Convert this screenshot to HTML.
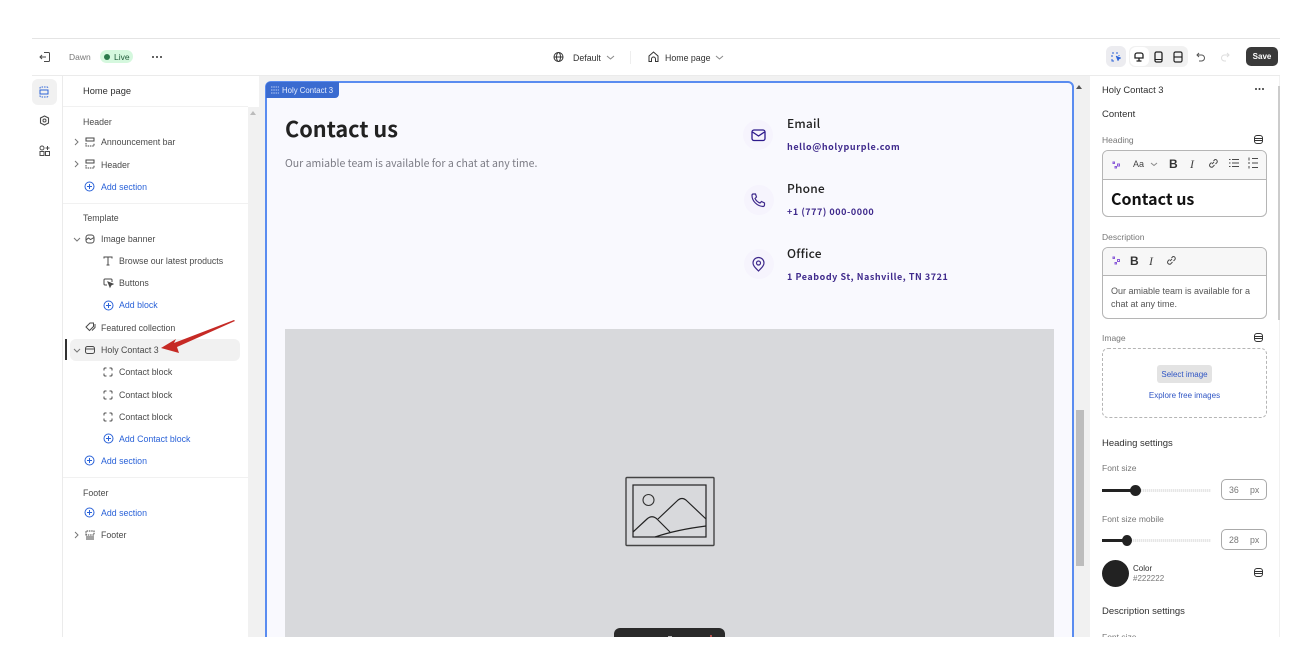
<!DOCTYPE html>
<html><head><meta charset="utf-8">
<style>
html,body{margin:0;padding:0;background:#fff}
body{width:1304px;height:664px;overflow:hidden;position:relative;font-family:"Liberation Sans",sans-serif;color:#444}
.b{position:absolute}
.t{position:absolute;white-space:nowrap;font-size:8.800px;line-height:12px;color:#4a4a4a}
.h{color:#303030}
.bl{color:#2a62d8}
.s{color:#777}
.p{position:absolute;white-space:nowrap;font-family:"Noto Sans CJK JP",sans-serif}
svg{position:absolute;overflow:visible;fill:none;stroke:#4a4a4a;stroke-width:1}
#wrap{filter:blur(.3px)}
</style></head><body>
<div id="wrap" class="b" style="left:0;top:0;width:1304px;height:664px;overflow:hidden">

<!-- frame -->
<div class="b" style="left:32px;top:38px;width:1248px;height:1px;background:#e4e4e4"></div>
<div class="b" style="left:32px;top:75px;width:1248px;height:1px;background:#ebebeb"></div>

<!-- top bar left -->
<svg style="left:39px;top:51px" width="12" height="12"><path d="M5 1.500h4.500a1 1 0 0 1 1 1v7a1 1 0 0 1-1 1H5M1 6h6M3 4 1 6l2 2"/></svg>
<div class="t s" style="left:69px;top:51px;font-size:8.500px">Dawn</div>
<div class="b" style="left:100px;top:50px;width:33px;height:13px;border-radius:7px;background:#d5f8de"></div>
<div class="b" style="left:104px;top:54px;width:6px;height:6px;border-radius:50%;background:#2b7a4b"></div>
<div class="t" style="left:114px;top:51px;font-size:8.500px;color:#1f5a39">Live</div>
<div class="b" style="left:152px;top:56px;width:2px;height:2px;background:#333;border-radius:50%;box-shadow:4px 0 #333,8px 0 #333"></div>

<!-- top bar center -->
<svg style="left:553px;top:51px" width="12" height="12"><circle cx="5.500" cy="6" r="4.500" stroke="#333"/><ellipse cx="5.500" cy="6" rx="2" ry="4.500" stroke="#333"/><path d="M1 6h9" stroke="#333"/></svg>
<div class="t h" style="left:573px;top:52px">Default</div>
<svg style="left:606px;top:55px" width="9" height="6"><path d="M1 1l3.500 3L8 1" stroke="#888"/></svg>
<div class="b" style="left:630px;top:51px;width:1px;height:13px;background:#eee"></div>
<svg style="left:648px;top:51px" width="11" height="12"><path d="M1 5 5.500 1 10 5v5.500H7.500V8a2 2 0 0 0-4 0v2.500H1z" stroke="#333"/></svg>
<div class="t h" style="left:665px;top:52px">Home page</div>
<svg style="left:715px;top:55px" width="9" height="6"><path d="M1 1l3.500 3L8 1" stroke="#888"/></svg>

<!-- top bar right -->
<div class="b" style="left:1106px;top:46px;width:20px;height:21px;border-radius:6px;background:#ececf0"></div>
<svg style="left:1111px;top:52px" width="11" height="10"><path d="M1 1h2M5 1h2M1 3v2M1 7v2h2M8 3v1" stroke="#2a62d8"/><path d="M5 4l5 2-2 1-1 2z" fill="#2a62d8" stroke="#2a62d8" stroke-width=".5"/></svg>
<div class="b" style="left:1129px;top:46px;width:59px;height:21px;border-radius:6px;background:#f1f1f1"></div>
<div class="b" style="left:1130px;top:47px;width:19px;height:19px;border-radius:6px;background:#fff"></div>
<svg style="left:1134px;top:52px" width="10" height="11"><path d="M1 3a2 2 0 0 1 2-2h4a2 2 0 0 1 2 2v3H1zM2.500 9h5M5 6v3" stroke="#222" stroke-width="1.300"/></svg>
<svg style="left:1154px;top:51px" width="9" height="12"><rect x="1" y="1" width="7" height="10" rx="1.500" stroke="#222" stroke-width="1.300"/><path d="M1 8.500h7" stroke="#222"/></svg>
<svg style="left:1173px;top:51px" width="10" height="12"><rect x="1" y="1" width="8" height="10" rx="1.500" stroke="#222" stroke-width="1.200"/><path d="M1 6h8" stroke="#222" stroke-width="1.200"/></svg>
<svg style="left:1196px;top:52px" width="10" height="10"><path d="M3 1 1 3l2 2M1 3h4.500a3 3 0 0 1 0 6H3" stroke="#555"/></svg>
<svg style="left:1220px;top:52px" width="10" height="10"><path d="M7 1l2 2-2 2M9 3H4.500a3 3 0 0 0 0 6H6" stroke="#ddd"/></svg>
<div class="b" style="left:1246px;top:47px;width:32px;height:19px;border-radius:5px;background:#3a3a3a"></div>
<div class="t" style="left:1246px;top:51px;width:32px;text-align:center;color:#fff;font-size:8px;font-weight:bold">Save</div>

<!-- left rail -->
<div class="b" style="left:62px;top:76px;width:1px;height:561px;background:#ebebeb"></div>
<div class="b" style="left:32px;top:79px;width:25px;height:26px;border-radius:6px;background:#f1f1f1"></div>
<svg style="left:39px;top:86px" width="10" height="12"><path d="M1 2.500V2a1 1 0 0 1 1-1h6a1 1 0 0 1 1 1v.500M1 9.500v.500a1 1 0 0 0 1 1h6a1 1 0 0 0 1-1v-.500" stroke="#2a62d8" stroke-dasharray="1.500 1"/><rect x="1" y="4" width="8" height="4" stroke="#2a62d8"/></svg>
<svg style="left:39px;top:115px" width="11" height="11"><path d="M5.500 1 9.500 3v5l-4 2-4-2V3z" stroke-width="1.100"/><circle cx="5.500" cy="5.500" r="1.500"/></svg>
<svg style="left:39px;top:145px" width="11" height="11"><circle cx="3" cy="3" r="2"/><rect x="1" y="6.500" width="4" height="4"/><rect x="6.500" y="6.500" width="4" height="4"/><path d="M8.500 1v4M6.500 3h4"/></svg>

<!-- sidebar -->
<div class="t h" style="left:83px;top:85px;font-size:9.300px">Home page</div>
<div class="b" style="left:63px;top:106px;width:185px;height:1px;background:#f1f1f1"></div>
<div class="t" style="left:83px;top:116px">Header</div>
<svg style="left:74px;top:138px" width="5" height="8"><path d="M1 1l3 3-3 3" stroke="#777"/></svg>
<svg style="left:85px;top:137px" width="10" height="10"><path d="M1 1h8v3H1z" stroke="#444"/><path d="M1 6v3h8V6" stroke="#444" stroke-dasharray="1.500 .8"/></svg>
<div class="t" style="left:101px;top:136px">Announcement bar</div>
<svg style="left:74px;top:160px" width="5" height="8"><path d="M1 1l3 3-3 3" stroke="#777"/></svg>
<svg style="left:85px;top:159px" width="10" height="10"><path d="M1 1h8v3H1z" stroke="#444"/><path d="M1 6v3h8V6" stroke="#444" stroke-dasharray="1.500 .8"/></svg>
<div class="t" style="left:101px;top:158.500px">Header</div>
<svg style="left:84px;top:181px" width="11" height="11"><circle cx="5.500" cy="5.500" r="4.500" stroke="#2a62d8"/><path d="M5.500 3v5M3 5.500h5" stroke="#2a62d8"/></svg>
<div class="t bl" style="left:101px;top:180.500px">Add section</div>
<div class="b" style="left:63px;top:203px;width:185px;height:1px;background:#f1f1f1"></div>

<div class="t" style="left:83px;top:212px">Template</div>
<svg style="left:73px;top:237px" width="8" height="5"><path d="M1 1l3 3 3-3" stroke="#777"/></svg>
<svg style="left:85px;top:234px" width="10" height="10"><rect x="1" y="1" width="8" height="8" rx="2.500"/><path d="M1 6l2.500-2 2 1.500L9 3.500"/></svg>
<div class="t" style="left:101px;top:233px">Image banner</div>
<svg style="left:103px;top:256px" width="10" height="10"><path d="M1 2.500V1h8v1.500M5 1v8M3.500 9h3"/></svg>
<div class="t" style="left:119px;top:255px">Browse our latest products</div>
<svg style="left:103px;top:278px" width="11" height="10"><path d="M4 7H2a1 1 0 0 1-1-1V2a1 1 0 0 1 1-1h6a1 1 0 0 1 1 1v2"/><path d="M5 4l5 2-2 1-1 2z" fill="#4a4a4a"/></svg>
<div class="t" style="left:119px;top:277px">Buttons</div>
<svg style="left:103px;top:300px" width="11" height="11"><circle cx="5.500" cy="5.500" r="4.500" stroke="#2a62d8"/><path d="M5.500 3v5M3 5.500h5" stroke="#2a62d8"/></svg>
<div class="t bl" style="left:119px;top:299px">Add block</div>
<svg style="left:85px;top:322px" width="11" height="10"><path d="M1 5l4-4h3.500v3.500l-4 4z"/><path d="M7 8.500 10 5.500V2"/></svg>
<div class="t" style="left:101px;top:322px">Featured collection</div>

<div class="b" style="left:65px;top:339px;width:2px;height:21px;background:#333"></div>
<div class="b" style="left:70px;top:339px;width:170px;height:22px;border-radius:6px;background:#f1f1f1"></div>
<svg style="left:73px;top:348px" width="8" height="5"><path d="M1 1l3 3 3-3" stroke="#777"/></svg>
<svg style="left:85px;top:345px" width="10" height="10"><rect x=".5" y="1.500" width="9" height="7" rx="2"/><path d="M.5 4h9"/></svg>
<div class="t" style="left:101px;top:344px">Holy Contact 3</div>
<svg style="left:160px;top:319px" width="76" height="36"><path d="M74 1 14 24 16 20 1 29 19 34 17 28 75 2z" fill="#c62a25" stroke="none"/></svg>

<svg style="left:103px;top:367px" width="10" height="10"><path d="M1 3.500V2a1 1 0 0 1 1-1h1.500M6.500 1H8a1 1 0 0 1 1 1v1.500M9 6.500V8a1 1 0 0 1-1 1H6.500M3.500 9H2a1 1 0 0 1-1-1V6.500"/></svg>
<div class="t" style="left:119px;top:366px">Contact block</div>
<svg style="left:103px;top:390px" width="10" height="10"><path d="M1 3.500V2a1 1 0 0 1 1-1h1.500M6.500 1H8a1 1 0 0 1 1 1v1.500M9 6.500V8a1 1 0 0 1-1 1H6.500M3.500 9H2a1 1 0 0 1-1-1V6.500"/></svg>
<div class="t" style="left:119px;top:389px">Contact block</div>
<svg style="left:103px;top:412px" width="10" height="10"><path d="M1 3.500V2a1 1 0 0 1 1-1h1.500M6.500 1H8a1 1 0 0 1 1 1v1.500M9 6.500V8a1 1 0 0 1-1 1H6.500M3.500 9H2a1 1 0 0 1-1-1V6.500"/></svg>
<div class="t" style="left:119px;top:411px">Contact block</div>
<svg style="left:103px;top:433px" width="11" height="11"><circle cx="5.500" cy="5.500" r="4.500" stroke="#2a62d8"/><path d="M5.500 3v5M3 5.500h5" stroke="#2a62d8"/></svg>
<div class="t bl" style="left:119px;top:433px">Add Contact block</div>
<svg style="left:84px;top:455px" width="11" height="11"><circle cx="5.500" cy="5.500" r="4.500" stroke="#2a62d8"/><path d="M5.500 3v5M3 5.500h5" stroke="#2a62d8"/></svg>
<div class="t bl" style="left:101px;top:455px">Add section</div>
<div class="b" style="left:63px;top:477px;width:185px;height:1px;background:#f1f1f1"></div>
<div class="t" style="left:83px;top:487px">Footer</div>
<svg style="left:84px;top:507px" width="11" height="11"><circle cx="5.500" cy="5.500" r="4.500" stroke="#2a62d8"/><path d="M5.500 3v5M3 5.500h5" stroke="#2a62d8"/></svg>
<div class="t bl" style="left:101px;top:507px">Add section</div>
<svg style="left:74px;top:531px" width="5" height="8"><path d="M1 1l3 3-3 3" stroke="#777"/></svg>
<svg style="left:85px;top:530px" width="10" height="10"><path d="M1 5V1h8v4z" stroke="#444" stroke-dasharray="1.500 .8"/><path d="M1 7h8M1 9h8" stroke="#444"/></svg>
<div class="t" style="left:101px;top:529px">Footer</div>

<!-- sidebar scrollbar + preview background -->
<div class="b" style="left:248px;top:76px;width:842px;height:561px;background:#f1f1f1"></div>
<div class="b" style="left:248px;top:76px;width:11px;height:31px;background:#fff"></div>
<svg style="left:250px;top:111px" width="6" height="4"><path d="M0 4 3 0l3 4z" fill="#bbb" stroke="none"/></svg>

<!-- preview -->
<div class="b" style="left:265px;top:81px;width:805px;height:570px;border:2px solid #5a8cf0;border-radius:6px 6px 0 0;background:#f9f9fe;overflow:hidden"></div>
<div class="b" style="left:266px;top:82px;width:73px;height:16px;background:#3a6bd0;border-radius:4px 0 4px 0"></div>
<svg style="left:271px;top:86px" width="8" height="8"><path d="M0 1h8M0 4h8M0 7h8" stroke="#b9cdf5" stroke-dasharray="1.500 .8"/></svg>
<div class="t" style="left:282px;top:85px;color:#e8effe;font-size:7.800px">Holy Contact 3</div>

<div class="p" style="left:285px;top:113px;font-size:21.700px;line-height:32px;font-weight:700;color:#222">Contact us</div>
<div class="p" style="left:285px;top:156px;font-size:10.500px;line-height:16px;color:#7b7b84">Our amiable team is available for a chat at any time.</div>

<div class="b" style="left:743px;top:120px;width:30px;height:30px;border-radius:50%;background:#f6f4fd"></div>
<svg style="left:751px;top:129px" width="15" height="13"><rect x="1" y="1" width="13" height="10.500" rx="2" stroke="#2d1a8c" stroke-width="1.300"/><path d="M1.500 3 7.500 7l6-4" stroke="#2d1a8c" stroke-width="1.300"/></svg>
<div class="p" style="left:787px;top:115px;font-size:12px;line-height:18px;font-weight:500;color:#222;letter-spacing:.2px">Email</div>
<div class="p" style="left:787px;top:140px;font-size:9px;line-height:14px;font-weight:700;color:#3f2a8c;letter-spacing:.58px">hello@holypurple.com</div>

<div class="b" style="left:744px;top:185px;width:30px;height:30px;border-radius:50%;background:#f6f4fd"></div>
<svg style="left:751px;top:193px" width="15" height="14"><path d="M2 1h2.500l1 3-1.500 1.500A9 9 0 0 0 9 10l1.500-1.500 3 1.500v2a1.500 1.500 0 0 1-1.500 1.500C6 13 1 8 1 2.500A1.500 1.500 0 0 1 2 1z" stroke="#3f2a8c" stroke-width="1.200"/></svg>
<div class="p" style="left:787px;top:180px;font-size:12px;line-height:18px;font-weight:500;color:#222;letter-spacing:.2px">Phone</div>
<div class="p" style="left:787px;top:205px;font-size:9px;line-height:14px;font-weight:700;color:#3f2a8c;letter-spacing:.55px">+1 (777) 000-0000</div>

<div class="b" style="left:744px;top:249px;width:30px;height:30px;border-radius:50%;background:#f6f4fd"></div>
<svg style="left:752px;top:257px" width="13" height="15"><path d="M6.500 14C3 10.500 1 8.500 1 6a5.500 5.500 0 0 1 11 0c0 2.500-2 4.500-5.500 8z" stroke="#3f2a8c" stroke-width="1.200"/><circle cx="6.500" cy="6" r="2" stroke="#3f2a8c" stroke-width="1.200"/></svg>
<div class="p" style="left:787px;top:245px;font-size:12px;line-height:18px;font-weight:500;color:#222;letter-spacing:.2px">Office</div>
<div class="p" style="left:787px;top:270px;font-size:9px;line-height:14px;font-weight:700;color:#3f2a8c;letter-spacing:.55px">1 Peabody St, Nashville, TN 3721</div>

<div class="b" style="left:285px;top:329px;width:769px;height:308px;background:#d8d9dc"></div>
<svg style="left:625px;top:476px" width="91" height="71"><rect x="1" y="1.500" width="88" height="68" rx="1" stroke="#444" stroke-width="1.400"/><rect x="8" y="9" width="73" height="52" stroke="#222" stroke-width="1.200"/><circle cx="23.500" cy="24" r="5.500" stroke="#333" stroke-width="1.100"/><path d="M8 56 22 43Q27 38.500 32 43L45 56M33 43 52 25Q57 20 62 25L81 43M30 61C45 56 65 52 81 50" stroke="#222" stroke-width="1.200"/></svg>
<div class="b" style="left:614px;top:628px;width:111px;height:9px;border-radius:6px 6px 0 0;background:#2a2a2a"></div>
<div class="b" style="left:668px;top:636px;width:4px;height:1px;background:#bbb"></div>
<div class="b" style="left:710px;top:635px;width:2px;height:2px;background:#b5504c"></div>

<!-- preview scrollbar -->
<svg style="left:1076px;top:85px" width="6" height="4"><path d="M0 4 3 0l3 4z" fill="#555" stroke="none"/></svg>
<div class="b" style="left:1076px;top:410px;width:8px;height:156px;background:#bdbdbd"></div>

<!-- cover below -->
<div class="b" style="left:0;top:637px;width:1304px;height:27px;background:#fff"></div>

<!-- right panel -->
<div class="b" style="left:1091px;top:76px;width:189px;height:561px;background:#fff"></div>
<div class="b" style="left:1279px;top:76px;width:1px;height:561px;background:#f1f1f1"></div>
<div class="b" style="left:1278px;top:86px;width:2px;height:234px;background:#ccc"></div>
<div class="t h" style="left:1102px;top:83.500px;font-size:9.400px">Holy Contact 3</div>
<div class="b" style="left:1255px;top:88px;width:2px;height:2px;background:#333;border-radius:50%;box-shadow:3.500px 0 #333,7px 0 #333"></div>
<div class="t h" style="left:1102px;top:109px;font-size:9.500px">Content</div>

<div class="t s" style="left:1102px;top:134px;font-size:8.500px">Heading</div>
<svg style="left:1254px;top:135px" width="9" height="9"><rect x=".5" y=".5" width="8" height="8" rx="2.500" stroke="#333"/><path d="M.5 3.500h8M.5 5.500h8" stroke="#333"/></svg>
<div class="b" style="left:1102px;top:150px;width:163px;height:65px;border:1px solid #b5b5b5;border-radius:6px;overflow:hidden;background:#fff"><div style="height:28px;background:#f7f7f7;border-bottom:1px solid #b5b5b5"></div></div>
<svg style="left:1112px;top:160px" width="9" height="9"><path d="M1 2h1.500v1.500H1zM5.500 4h2v2h-2zM3 6.500h1.500V8H3z" stroke="#8a5ad8"/></svg>
<div class="t" style="left:1133px;top:158px;font-size:9px;color:#444">Aa</div>
<svg style="left:1150px;top:162px" width="8" height="5"><path d="M1 1l3 2.500L7 1" stroke="#888"/></svg>
<div class="t" style="left:1169px;top:158px;font-size:12px;font-weight:bold;color:#333">B</div>
<div class="t" style="left:1190px;top:158px;font-size:12px;font-family:'Liberation Serif',serif;font-style:italic;color:#444">I</div>
<svg style="left:1208px;top:158px" width="10" height="10"><path d="M4 6 6 4M3.500 4.500 2 6a2 2 0 0 0 2.800 2.800L6.500 7M5.500 3 7 1.500A2 2 0 0 1 9 4.500L7.500 6"/></svg>
<svg style="left:1229px;top:158px" width="10" height="10"><path d="M3 1.500h7M3 5h7M3 8.500h7M0 1.500h1.500M0 5h1.500M0 8.500h1.500"/></svg>
<svg style="left:1248px;top:157px" width="10" height="12"><path d="M4 1.500h6M4 6h6M4 10.500h6M1 .5v3M1 5v2M1 9v2.500"/></svg>
<div class="t" style="left:1111px;top:188px;font-size:16px;line-height:20px;font-weight:bold;color:#111;font-family:'Noto Sans CJK JP',sans-serif">Contact us</div>

<div class="t s" style="left:1102px;top:231px;font-size:8.500px">Description</div>
<div class="b" style="left:1102px;top:247px;width:163px;height:70px;border:1px solid #b5b5b5;border-radius:6px;overflow:hidden;background:#fff"><div style="height:27px;background:#f7f7f7;border-bottom:1px solid #b5b5b5"></div></div>
<svg style="left:1112px;top:256px" width="9" height="9"><path d="M1 1h1.500v1.500H1zM5.500 3.500h2v2h-2zM3 6.500h1.500V8H3z" stroke="#8a5ad8"/></svg>
<div class="t" style="left:1130px;top:255px;font-size:12px;font-weight:bold;color:#333">B</div>
<div class="t" style="left:1149px;top:255px;font-size:12px;font-family:'Liberation Serif',serif;font-style:italic;color:#444">I</div>
<svg style="left:1166px;top:255px" width="10" height="10"><path d="M4 6 6 4M3.500 4.500 2 6a2 2 0 0 0 2.800 2.800L6.500 7M5.500 3 7 1.500A2 2 0 0 1 9 4.500L7.500 6"/></svg>
<div class="t" style="left:1111px;top:285px;font-size:9px;color:#555">Our amiable team is available for a</div>
<div class="t" style="left:1111px;top:298px;font-size:9px;color:#555">chat at any time.</div>

<div class="t s" style="left:1102px;top:332px;font-size:8.500px">Image</div>
<svg style="left:1254px;top:333px" width="9" height="9"><rect x=".5" y=".5" width="8" height="8" rx="2.500" stroke="#333"/><path d="M.5 3.500h8M.5 5.500h8" stroke="#333"/></svg>
<div class="b" style="left:1102px;top:348px;width:163px;height:68px;border:1px dashed #b5b5b5;border-radius:6px"></div>
<div class="b" style="left:1157px;top:365px;width:55px;height:18px;border-radius:3px;background:#e3e3e3"></div>
<div class="t" style="left:1157px;top:369px;width:55px;text-align:center;color:#2f55c4;font-size:8px">Select image</div>
<div class="t" style="left:1102px;top:390px;width:165px;text-align:center;color:#2f55c4;font-size:8px">Explore free images</div>

<div class="t h" style="left:1102px;top:438px;font-size:9.500px">Heading settings</div>
<div class="t s" style="left:1102px;top:462px;font-size:8.500px">Font size</div>
<div class="b" style="left:1102px;top:489px;width:33px;height:3px;background:#222"></div>
<div class="b" style="left:1135px;top:489px;width:76px;height:3px;background:repeating-linear-gradient(90deg,#e6e6e6 0 1px,#f6f6f6 1px 2px)"></div>
<div class="b" style="left:1130px;top:485px;width:11px;height:11px;border-radius:50%;background:#222"></div>
<div class="b" style="left:1221px;top:479px;width:44px;height:19px;border:1px solid #aaa;border-radius:5px"></div>
<div class="t s" style="left:1229px;top:484px">36</div>
<div class="t s" style="left:1250px;top:484px">px</div>

<div class="t s" style="left:1102px;top:513px;font-size:8.500px">Font size mobile</div>
<div class="b" style="left:1102px;top:539px;width:25px;height:3px;background:#222"></div>
<div class="b" style="left:1127px;top:539px;width:84px;height:3px;background:repeating-linear-gradient(90deg,#e6e6e6 0 1px,#f6f6f6 1px 2px)"></div>
<div class="b" style="left:1122px;top:535px;width:10px;height:11px;border-radius:50%;background:#222"></div>
<div class="b" style="left:1221px;top:529px;width:44px;height:19px;border:1px solid #aaa;border-radius:5px"></div>
<div class="t s" style="left:1229px;top:534px">28</div>
<div class="t s" style="left:1250px;top:534px">px</div>

<div class="b" style="left:1102px;top:560px;width:27px;height:27px;border-radius:50%;background:#222"></div>
<div class="t h" style="left:1133px;top:563px;font-size:8px">Color</div>
<div class="t s" style="left:1133px;top:573px;font-size:8px">#222222</div>
<svg style="left:1254px;top:568px" width="9" height="9"><rect x=".5" y=".5" width="8" height="8" rx="2.500" stroke="#333"/><path d="M.5 3.500h8M.5 5.500h8" stroke="#333"/></svg>

<div class="t h" style="left:1102px;top:606px;font-size:9.500px">Description settings</div>
<div class="t s" style="left:1102px;top:631px;font-size:8.500px">Font size</div>
<div class="b" style="left:1090px;top:637px;width:200px;height:27px;background:#fff"></div>
</div>
</body></html>
